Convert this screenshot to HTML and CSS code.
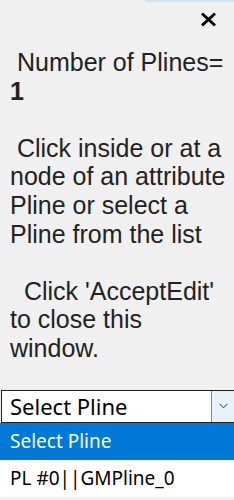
FILE: index.html
```html
<!DOCTYPE html>
<html lang="en">
<head>
  <meta charset="UTF-8" />
  <title>Edit Pline</title>
  <link rel="stylesheet" href="styles.css">
</head>
<body>

<!-- Info panel -->
<div class="panel">
  <div class="head">
    <div class="edge"></div>
    <button class="close" title="Close">
      <svg width="17" height="15" viewBox="0 0 17 15">
        <path d="M2 1.5 L15 13.5 M15 1.5 L2 13.5" stroke="#000" stroke-width="3" fill="none" />
      </svg>
    </button>
  </div>
  <p class="msg"> Number of Plines= <b>1</b></p>
  <p class="msg"> Click inside or at a node of an attribute Pline or select a Pline from the list</p>
  <p class="msg">  Click 'AcceptEdit' to close this window.</p>
</div>

<!-- Pline picker -->
<div class="picker">
  <div class="select">
    <span class="value">Select Pline</span>
    <span class="arrow">
      <svg width="9" height="6" viewBox="0 0 9 6">
        <path d="M0.5 0.8 L4.5 4.8 L8.5 0.8" stroke="#333" stroke-width="1" fill="none" />
      </svg>
    </span>
  </div>
  <ul class="options">
    <li class="active">Select Pline</li>
    <li>PL #0||GMPline_0</li>
  </ul>
</div>

</body>
</html>
```

FILE: styles.css
```css
body {
  margin: 0;
  background: #f0f0f0;
  font-family: "Liberation Sans", Arial, sans-serif;
  width: 234px;
  height: 500px;
  overflow: hidden;
}
.panel {
  padding: 0 2px 0 10px;
}
.head {
  display: flex;
  flex-direction: column;
  align-items: flex-end;
  height: 48px;
  margin-right: -2px;
}
.edge {
  width: 89px;
  height: 2px;
  background: #cfe2f2;
}
.close {
  margin: 10px 17px 0 0;
  padding: 0;
  border: none;
  background: none;
  line-height: 0;
  cursor: pointer;
}
.msg {
  margin: 0 0 28.6px 0;
  font-size: 25px;
  line-height: 28.6px;
  color: #222;
  white-space: pre-wrap;
}
.msg:last-child {
  margin-bottom: 0;
}
.picker {
  margin-top: 27px;
  font-family: "Noto Sans", "Open Sans", sans-serif;
}
.select {
  display: flex;
  height: 31px;
  margin-left: 1px;
  border: 1px solid #1e1e1e;
  border-right: none;
  background: #fff;
}
.value {
  flex: 1;
  padding-left: 8px;
  font-size: 22px;
  line-height: 31px;
  color: #000;
}
.arrow {
  width: 22px;
  display: flex;
  align-items: center;
  justify-content: center;
  border-left: 1px solid #7a8896;
  background: #e8f0f8;
}
.options {
  list-style: none;
  margin: 0;
  padding: 0;
  background: #fff;
}
.options li {
  height: 37px;
  padding-left: 10px;
  font-size: 19px;
  line-height: 37px;
  color: #000;
}
.options li.active {
  background: #0078d7;
  color: #fff;
}
```
